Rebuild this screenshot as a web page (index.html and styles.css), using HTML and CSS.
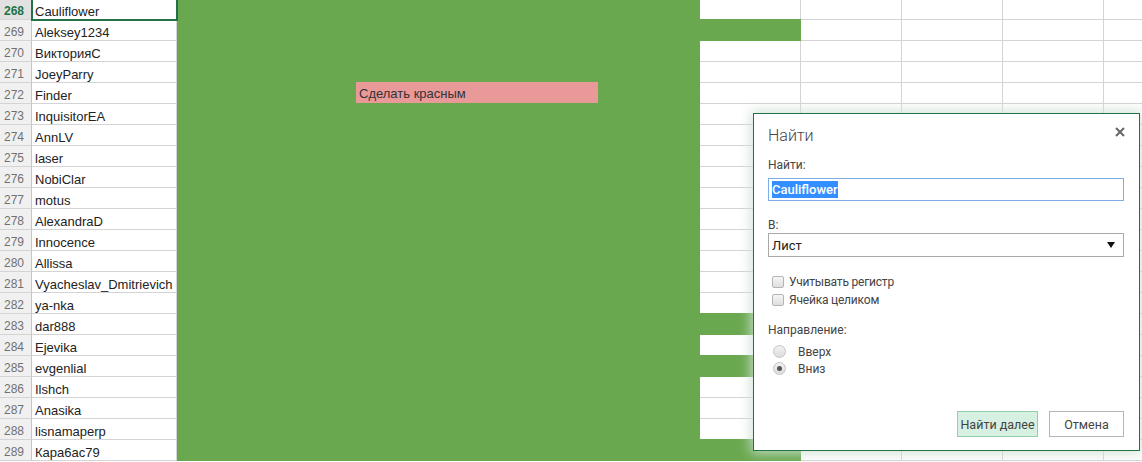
FILE: index.html
```
<!DOCTYPE html>
<html>
    <head>
        <meta charset="utf-8">
        <link rel="stylesheet" href="styles.css">
    </head>
    <body>
        <div class="sheet">
            <div class="merged"><div class="note">Сделать красным</div></div>

            <div class="rh on">268</div><div class="c on">Cauliflower</div><div class="c"></div><div class="c"></div><div class="c"></div><div class="c"></div><div class="c"></div>
            <div class="rh">269</div><div class="c">Aleksey1234</div><div class="c g"></div><div class="c"></div><div class="c"></div><div class="c"></div><div class="c"></div>
            <div class="rh">270</div><div class="c">ВикторияС</div><div class="c"></div><div class="c"></div><div class="c"></div><div class="c"></div><div class="c"></div>
            <div class="rh">271</div><div class="c">JoeyParry</div><div class="c"></div><div class="c"></div><div class="c"></div><div class="c"></div><div class="c"></div>
            <div class="rh">272</div><div class="c">Finder</div><div class="c"></div><div class="c"></div><div class="c"></div><div class="c"></div><div class="c"></div>
            <div class="rh">273</div><div class="c">InquisitorEA</div><div class="c"></div><div class="c"></div><div class="c"></div><div class="c"></div><div class="c"></div>
            <div class="rh">274</div><div class="c">AnnLV</div><div class="c"></div><div class="c"></div><div class="c"></div><div class="c"></div><div class="c"></div>
            <div class="rh">275</div><div class="c">laser</div><div class="c"></div><div class="c"></div><div class="c"></div><div class="c"></div><div class="c"></div>
            <div class="rh">276</div><div class="c">NobiClar</div><div class="c"></div><div class="c"></div><div class="c"></div><div class="c"></div><div class="c"></div>
            <div class="rh">277</div><div class="c">motus</div><div class="c"></div><div class="c"></div><div class="c"></div><div class="c"></div><div class="c"></div>
            <div class="rh">278</div><div class="c">AlexandraD</div><div class="c"></div><div class="c"></div><div class="c"></div><div class="c"></div><div class="c"></div>
            <div class="rh">279</div><div class="c">Innocence</div><div class="c"></div><div class="c"></div><div class="c"></div><div class="c"></div><div class="c"></div>
            <div class="rh">280</div><div class="c">Allissa</div><div class="c"></div><div class="c"></div><div class="c"></div><div class="c"></div><div class="c"></div>
            <div class="rh">281</div><div class="c">Vyacheslav_Dmitrievich</div><div class="c"></div><div class="c"></div><div class="c"></div><div class="c"></div><div class="c"></div>
            <div class="rh">282</div><div class="c">ya-nka</div><div class="c"></div><div class="c"></div><div class="c"></div><div class="c"></div><div class="c"></div>
            <div class="rh">283</div><div class="c">dar888</div><div class="c g"></div><div class="c"></div><div class="c"></div><div class="c"></div><div class="c"></div>
            <div class="rh">284</div><div class="c">Ejevika</div><div class="c"></div><div class="c"></div><div class="c"></div><div class="c"></div><div class="c"></div>
            <div class="rh">285</div><div class="c">evgenlial</div><div class="c g"></div><div class="c"></div><div class="c"></div><div class="c"></div><div class="c"></div>
            <div class="rh">286</div><div class="c">Ilshch</div><div class="c"></div><div class="c"></div><div class="c"></div><div class="c"></div><div class="c"></div>
            <div class="rh">287</div><div class="c">Anasika</div><div class="c"></div><div class="c"></div><div class="c"></div><div class="c"></div><div class="c"></div>
            <div class="rh">288</div><div class="c">lisnamaperp</div><div class="c"></div><div class="c"></div><div class="c"></div><div class="c"></div><div class="c"></div>
            <div class="rh">289</div><div class="c">Кара6ас79</div><div class="c g"></div><div class="c"></div><div class="c"></div><div class="c"></div><div class="c"></div>
        </div>

        <div class="find">
            <div class="find-head">
                <h2>Найти</h2>
                <span class="close">
                    <svg width="10" height="10" viewBox="0 0 10 10"><path d="M1 1L9 9M9 1L1 9" stroke="#666" stroke-width="2"/></svg>
                </span>
            </div>
            <div class="lbl first">Найти:</div>
            <div class="field"><span class="picked">Cauliflower</span></div>
            <div class="lbl second">В:</div>
            <div class="select"><span>Лист</span><i class="arrow"></i></div>
            <div class="checks">
                <div class="opt"><span class="box"></span>Учитывать регистр</div>
                <div class="opt"><span class="box"></span>Ячейка целиком</div>
            </div>
            <div class="lbl third">Направление:</div>
            <div class="radios">
                <div class="rad"><span class="dot"></span>Вверх</div>
                <div class="rad"><span class="dot on"></span>Вниз</div>
            </div>
            <div class="actions">
                <button class="go">Найти далее</button>
                <button class="no">Отмена</button>
            </div>
        </div>
    </body>
</html>
```

FILE: styles.css
```
*, *:after, *:before {
    box-sizing: border-box;
    margin: 0;
    padding: 0;
}
body {
    width: 1142px;
    height: 462px;
    overflow: hidden;
    background: #FFF;
    font-family: "Liberation Sans", Arial, sans-serif;
}
.sheet {
    display: grid;
    grid-template-columns: 32px 145px 523px repeat(5, 101px);
    grid-auto-rows: 21px;
    margin-top: -1px;
}
.rh {
    display: flex;
    align-items: flex-end;
    padding-left: 4px;
    background: #f0f0f0;
    border-right: 1px solid #c6c6c6;
    border-bottom: 1px solid #d4d4d4;
    color: #707070;
    font-size: 12px;
    line-height: 15px;
}
.rh.on {
    background: #e1e1e1;
    color: #217346;
    font-weight: bold;
}
.c {
    display: flex;
    align-items: flex-end;
    padding: 0 3px;
    border-right: 1px solid #d4d4d4;
    border-bottom: 1px solid #d4d4d4;
    color: #222;
    font-size: 13px;
    line-height: 15px;
    white-space: nowrap;
}
.c.on {
    position: relative;
    z-index: 1;
    outline: 2px solid #217346;
    outline-offset: -1px;
}
.c.g {
    background: #6aa84f;
    border-color: #6aa84f;
    box-shadow: 0 -1px 0 #6aa84f;
}
.merged {
    grid-column: 3;
    grid-row: 1 / span 22;
    background: #6aa84f;
    padding: 83px 0 0 179px;
}
.note {
    display: flex;
    align-items: flex-end;
    width: 242px;
    height: 21px;
    padding: 0 3px 2px;
    background: #ea9999;
    color: #333;
    font-size: 13px;
    line-height: 15px;
}

/* find dialog */
.find {
    position: absolute;
    left: 753px;
    top: 113px;
    width: 387px;
    height: 338px;
    display: flex;
    flex-direction: column;
    padding: 0 15px 13px 14px;
    background: #FFF;
    border: 1px solid #217346;
    box-shadow: 0 0 12px 2px rgba(205, 225, 212, 0.95);
    font-family: Roboto, "Noto Sans", sans-serif;
    font-size: 12px;
    color: #444;
}
.find-head {
    display: flex;
    justify-content: space-between;
    margin-top: 10px;
}
.find-head h2 {
    font-size: 16px;
    font-weight: 300;
    line-height: 24px;
    color: #444;
}
.close {
    margin: 3px -1px 0 0;
    line-height: 0;
}
.lbl {
    line-height: 16px;
}
.lbl.first {
    margin-top: 9px;
}
.lbl.second {
    margin-top: 16px;
}
.lbl.third {
    margin-top: 13px;
}
.field {
    display: flex;
    align-items: center;
    height: 23px;
    margin-top: 5px;
    padding-left: 3px;
    border: 1px solid #7eaee6;
    font-size: 13px;
    font-weight: 500;
}
.picked {
    background: #338fff;
    color: #FFF;
    line-height: 17px;
}
.select {
    display: flex;
    align-items: center;
    justify-content: space-between;
    height: 24px;
    padding: 0 8px 0 3px;
    border: 1px solid #a9a9a9;
    color: #222;
    font-size: 13px;
}
.arrow {
    width: 0;
    height: 0;
    border-left: 4px solid transparent;
    border-right: 4px solid transparent;
    border-top: 6px solid #111;
}
.checks {
    margin-top: 16px;
}
.opt, .rad {
    display: flex;
    align-items: center;
    height: 18px;
}
.opt {
    letter-spacing: -0.2px;
}
.box {
    width: 12px;
    height: 12px;
    margin: 0 5px 0 4px;
    border: 1px solid #b4b4b4;
    border-radius: 2px;
    background: linear-gradient(#f6f6f6, #dedede);
}
.radios {
    margin-top: 5px;
}
.rad {
    height: 17px;
}
.dot {
    display: flex;
    align-items: center;
    justify-content: center;
    width: 13px;
    height: 13px;
    margin: 0 12px 0 5px;
    border: 1px solid #c4c4c4;
    border-radius: 50%;
    background: linear-gradient(#f2f2f2, #dcdcdc);
}
.dot.on:after {
    content: "";
    width: 5px;
    height: 5px;
    border-radius: 50%;
    background: #555;
}
.actions {
    display: flex;
    justify-content: flex-end;
    gap: 11px;
    margin-top: auto;
}
.actions button {
    height: 26px;
    background: #FFF;
    border: 1px solid #b5b5b5;
    color: #444;
    font-family: inherit;
    font-size: 12.5px;
}
.actions button.go {
    width: 81px;
    background: #d6f0e1;
    border-color: #93cfab;
}
.actions button.no {
    width: 75px;
}
```
